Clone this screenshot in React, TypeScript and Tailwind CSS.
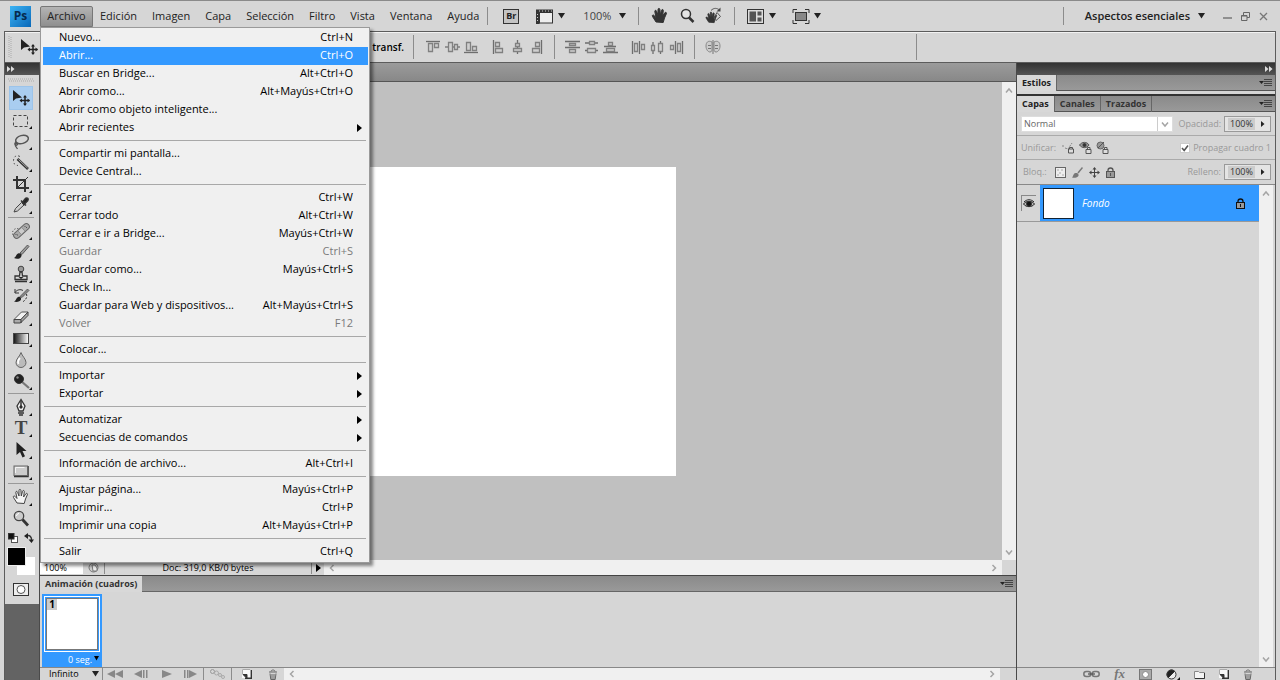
import { useState } from 'react';
import type { ReactNode } from 'react';

type MenuItem = { label: string; keys?: string; disabled?: boolean; submenu?: boolean };

const fileMenu: MenuItem[][] = [
  [
    { label: 'Nuevo...', keys: 'Ctrl+N' },
    { label: 'Abrir...', keys: 'Ctrl+O' },
    { label: 'Buscar en Bridge...', keys: 'Alt+Ctrl+O' },
    { label: 'Abrir como...', keys: 'Alt+Mayús+Ctrl+O' },
    { label: 'Abrir como objeto inteligente...' },
    { label: 'Abrir recientes', submenu: true }
  ],
  [{ label: 'Compartir mi pantalla...' }, { label: 'Device Central...' }],
  [
    { label: 'Cerrar', keys: 'Ctrl+W' },
    { label: 'Cerrar todo', keys: 'Alt+Ctrl+W' },
    { label: 'Cerrar e ir a Bridge...', keys: 'Mayús+Ctrl+W' },
    { label: 'Guardar', keys: 'Ctrl+S', disabled: true },
    { label: 'Guardar como...', keys: 'Mayús+Ctrl+S' },
    { label: 'Check In...' },
    { label: 'Guardar para Web y dispositivos...', keys: 'Alt+Mayús+Ctrl+S' },
    { label: 'Volver', keys: 'F12', disabled: true }
  ],
  [{ label: 'Colocar...' }],
  [
    { label: 'Importar', submenu: true },
    { label: 'Exportar', submenu: true }
  ],
  [
    { label: 'Automatizar', submenu: true },
    { label: 'Secuencias de comandos', submenu: true }
  ],
  [{ label: 'Información de archivo...', keys: 'Alt+Ctrl+I' }],
  [
    { label: 'Ajustar página...', keys: 'Mayús+Ctrl+P' },
    { label: 'Imprimir...', keys: 'Ctrl+P' },
    { label: 'Imprimir una copia', keys: 'Alt+Mayús+Ctrl+P' }
  ],
  [{ label: 'Salir', keys: 'Ctrl+Q' }]
];

const menus = ['Edición', 'Imagen', 'Capa', 'Selección', 'Filtro', 'Vista', 'Ventana', 'Ayuda'];

const Svg = ({ children, w = 18, h = 18 }: { children: ReactNode; w?: number; h?: number }) => (
  <svg width={w} height={h} viewBox={`0 0 ${w} ${h}`} fill="none" stroke="#333" className="block shrink-0" aria-hidden="true">
    {children}
  </svg>
);

const Caret = () => (
  <Svg w={7} h={6}>
    <path d="M0 0h7L3.500 5.500z" fill="#222" stroke="none" />
  </Svg>
);

const Chevron = ({ dir }: { dir: 'up' | 'down' | 'left' | 'right' }) => {
  const d = {
    up: 'M1 6.500l3-3.500 3 3.500',
    down: 'M1 2.500l3 3.500 3-3.500',
    left: 'M5.500 1L2.500 4l3 3',
    right: 'M2.500 1l3 3-3 3'
  };
  return (
    <Svg w={8} h={8}>
      <path d={d[dir]} stroke="#a5a5a5" strokeWidth="1.500" />
    </Svg>
  );
};

const DoubleArrow = () => (
  <Svg w={8} h={6}>
    <path d="M0 0l3.500 3L0 6zM4 0l3.500 3L4 6z" fill="#ddd" stroke="none" />
  </Svg>
);

const PanelMenu = () => (
  <button type="button" aria-label="Menú del panel" className="px-[3px]">
    <Svg w={13} h={8}>
      <path d="M0 2h5L2.500 5z" fill="#222" stroke="none" />
      <path d="M5 .5h8M5 2.500h8M5 4.500h8M5 6.500h8" stroke="#444" />
    </Svg>
  </button>
);

const MoveIcon = () => (
  <Svg>
    <path d="M1 1v11l3-2.500L10 8.500z" fill="#222" stroke="none" />
    <path d="M13 7v9M8.500 11.500h9" stroke="#222" strokeWidth="1.500" />
    <path d="M13 6l2 2.500h-4zM13 17l2-2.500h-4zM7.500 11.500L10 9.500v4zM18 11.500l-2.500-2v4z" fill="#222" stroke="none" />
  </Svg>
);

const handPath = 'M5 15L1.500 9.500C.8 8 2.300 7.500 3.200 8.500L5 10.500 3.800 4.500C3.600 3 5.300 3 5.600 4.300L7 8V2.500C7 1 8.800 1 8.900 2.500L9.300 8l1.200-4.700c.4-1.300 2-1 1.800.4L11.600 9l2.200-3.200c.8-1 2.200-.2 1.500 1.100L13.500 11l-1.300 4.500z';

const toolGroups: { name: string; icon: ReactNode }[][] = [
  [
    { name: 'Marco rectangular', icon: <rect x="1.500" y="3.500" width="14" height="11" stroke="#444" strokeDasharray="3 2" /> },
    {
      name: 'Lazo',
      icon: (
        <>
          <ellipse cx="10" cy="6.500" rx="6.500" ry="4" transform="rotate(-15 10 6.500)" stroke="#555" strokeWidth="1.500" />
          <path d="M4 9c-3 2 .5 4.500 1.500 2.500S2.500 10 3.500 13l2 3" stroke="#555" strokeWidth="1.300" />
        </>
      )
    },
    {
      name: 'Selección rápida',
      icon: (
        <>
          <path d="M8 2.500C4 .5 1.500 3 1.500 6.500S3 11 6 11.500" strokeDasharray="2 2" stroke="#555" />
          <path d="M5.500 5l10.500 10" stroke="#333" strokeWidth="2.500" />
          <path d="M6.500 5.500l9 8.500" stroke="#ccc" strokeWidth=".8" />
        </>
      )
    },
    {
      name: 'Recortar',
      icon: (
        <>
          <path d="M5 1v12h12M1 5h12v12" strokeWidth="2" />
          <path d="M6 12L16 2" />
        </>
      )
    },
    {
      name: 'Cuentagotas',
      icon: (
        <>
          <path d="M2 16l1.500-3.500 6-6 2.500 2.500-6.500 6z" fill="#ccc" stroke="#444" />
          <path d="M9 4.500l5 5M10.500 6.500L13 3c1-1.500 3-1.500 3.200 0s-.7 2.300-2.200 3.500L12 8.500z" fill="#222" strokeWidth="1.500" />
        </>
      )
    }
  ],
  [
    {
      name: 'Pincel corrector',
      icon: (
        <>
          <circle cx="5" cy="11" r="4.500" strokeDasharray="1 2" />
          <rect x="0" y="6" width="19" height="6" rx="3" transform="rotate(-42 9.500 9)" fill="#aaa" stroke="#666" />
          <rect x="7" y="6.500" width="5" height="5" transform="rotate(-42 9.500 9)" fill="#ccc" stroke="#777" strokeWidth=".6" />
          <path d="M4 12v1M5.500 12.500v1M13 4v1M14.500 5v1" stroke="#555" />
        </>
      )
    },
    {
      name: 'Pincel',
      icon: (
        <>
          <path d="M8 10L15.500 2 17 3.500 10 11.500z" fill="#999" stroke="#444" strokeWidth=".8" />
          <path d="M2 15c2-.5 2-3.500 4-4.500s4 .5 3.500 2.500c-.8 3-5 3.500-7.500 2z" fill="#222" stroke="none" />
        </>
      )
    },
    {
      name: 'Tampón de clonar',
      icon: (
        <>
          <circle cx="9" cy="4" r="2.800" fill="#999" stroke="#444" />
          <path d="M8 7h2l.5 4h4.500v3.500H3V11h4.500zM3 16.500h12" fill="#ddd" stroke="#333" strokeWidth="1.300" />
          <path d="M6.500 12h5L9 14z" fill="#222" stroke="none" />
        </>
      )
    },
    {
      name: 'Pincel de historia',
      icon: (
        <>
          <path d="M8 10.500L15.500 3 17 4.500 10 11.500z" fill="#888" stroke="#444" strokeWidth=".7" />
          <path d="M2 15.500c2-.5 2-3.500 4-4.500s3.500.5 3 2.500-4.500 3-7 2z" fill="#222" stroke="none" />
          <path d="M3 3v4h4M3 6.500C5 3.500 8.500 3 11 4.500" />
          <path d="M14.500 8c1 3-.5 6-4 8" strokeDasharray="2 1.500" />
        </>
      )
    },
    {
      name: 'Borrador',
      icon: (
        <>
          <path d="M2 11.500L9.500 4H16l-7 7.500z" fill="#f2f2f2" stroke="#555" />
          <path d="M2 11.500V15h6.500L16 7.500V4l-7 7.500z" fill="#aaa" stroke="#444" />
          <path d="M9 11.500V15" />
        </>
      )
    },
    {
      name: 'Degradado',
      icon: (
        <>
          <defs>
            <linearGradient id="ramp">
              <stop stopColor="#111" />
              <stop offset="1" stopColor="#fff" />
            </linearGradient>
          </defs>
          <rect x="1.500" y="4.500" width="15" height="10" fill="url(#ramp)" stroke="#444" />
        </>
      )
    },
    {
      name: 'Desenfocar',
      icon: (
        <>
          <path d="M9 1.500C8 5 4 8 4 11.500a5 5 0 0 0 10 0C14 8 10 5 9 1.500z" fill="#bbb" stroke="#666" />
          <path d="M8 7c-2 2-2.500 4-1.500 6" stroke="#fff" strokeWidth="1.800" />
        </>
      )
    },
    {
      name: 'Sobreexponer',
      icon: (
        <>
          <path d="M9 9l8 7" stroke="#777" strokeWidth="2.300" />
          <circle cx="7" cy="7" r="4.500" fill="#222" />
          <circle cx="5.500" cy="5.500" r="1.200" fill="#888" stroke="none" />
        </>
      )
    }
  ],
  [
    {
      name: 'Pluma',
      icon: (
        <>
          <path d="M9 1.500L5 8l2 5h4l2-5z" fill="#eee" stroke="#333" strokeWidth="1.300" />
          <path d="M9 3v6M6 15h6M7 17h4" strokeWidth="1.500" />
          <circle cx="9" cy="9" r="1.200" fill="#222" />
        </>
      )
    },
    { name: 'Texto', icon: null },
    { name: 'Selección de trazado', icon: <path d="M4.500 1v13l3.500-3 2.500 5.500 2.500-1.200L10.500 10h4z" fill="#222" stroke="none" /> },
    {
      name: 'Rectángulo',
      icon: (
        <>
          <path d="M2 14.500h14V4" stroke="#333" strokeWidth="1.500" />
          <rect x="2" y="4" width="13.500" height="9.500" fill="#ccc" stroke="#666" />
          <path d="M3.500 11V5.500h9" stroke="#f4f4f4" />
        </>
      )
    }
  ],
  [
    { name: 'Mano', icon: <path d={handPath} fill="#f4f4f4" stroke="#444" /> },
    {
      name: 'Zoom',
      icon: (
        <>
          <path d="M10.500 10.500l5.500 6" strokeWidth="2.800" />
          <circle cx="7" cy="7" r="4.700" fill="#ccc" stroke="#444" strokeWidth="1.300" />
          <path d="M4.500 7C4.700 5.500 5.500 4.800 7 4.500" stroke="#fff" />
        </>
      )
    }
  ]
];

const groupHeights = ['h-[106px]', 'h-[172px]', 'h-[86px]', 'h-[43px]'];

const FileMenu = () => (
  <div role="menu" className="absolute top-full left-0 z-10 w-[330px] border border-[#9a9a9a] bg-[#f0f0f0] p-px text-[11px] text-black shadow-[3px_3px_3px_rgba(0,0,0,0.45)]">
    {fileMenu.map((group, i) => (
      <div key={i}>
        {i > 0 && (
          <div role="separator" className="flex h-2 items-center px-0.5">
            <div className="h-px grow bg-[#a8a8a8]" />
          </div>
        )}
        {group.map(item => (
          <button
            key={item.label}
            type="button"
            role="menuitem"
            disabled={item.disabled}
            className={`mx-px flex h-[18px] w-[325px] items-center pr-[5px] pl-4 text-left ${
              item.label === 'Abrir...' ? 'bg-[#3399ff] text-white' : item.disabled ? 'text-[#7a7a7a]' : ''
            }`}
          >
            <span className="grow">{item.label}</span>
            {item.keys && <span className="pr-[10px]">{item.keys}</span>}
            {item.submenu && (
              <Svg w={6} h={8}>
                <path d="M0 0l5 4-5 4z" fill="#000" stroke="none" />
              </Svg>
            )}
          </button>
        ))}
      </div>
    ))}
  </div>
);

const Divider = ({ className = '' }: { className?: string }) => <div className={`w-px shrink-0 bg-[#8c8c8c] ${className}`} />;

const MenuBar = () => (
  <header className="flex h-[31px] shrink-0 items-center border-t border-[#8a8a8a] pl-[10px] text-[12px] text-[#222]">
    <div className="mr-[9px] flex h-[21px] w-[21px] items-center justify-center bg-linear-to-br from-[#3cb4f5] to-[#0868b8] text-[12px] font-bold text-[#062a4d]">Ps</div>
    <nav className="flex items-center text-[11px]">
      <div className="relative">
        <button type="button" aria-expanded="true" className="block h-[21px] w-[53px] rounded-t-xs border border-[#777] bg-linear-to-b from-[#b4b4b4] to-[#8f8f8f]">
          Archivo
        </button>
        <FileMenu />
      </div>
      {menus.map(name => (
        <button key={name} type="button" className="h-5 pr-2 pl-[7px]">
          {name}
        </button>
      ))}
    </nav>
    <Divider className="mr-[15px] h-[18px]" />
    <button type="button" className="mr-4 h-[15px] w-4 border border-[#333] bg-[#c4c4c4] text-[9px] leading-[12px] font-bold">
      Br
    </button>
    <button type="button" aria-label="Ver extras" className="flex items-center gap-1">
      <Svg w={19} h={15}>
        <path d="M1 .5h17v3H4.500V15H1z" fill="#333" stroke="none" />
        <rect x="4.500" y="3.500" width="13" height="10.500" fill="#eee" stroke="#333" />
        <path d="M4 2h14" stroke="#ccc" strokeDasharray="1 2" />
        <path d="M2.500 5v9" stroke="#ccc" strokeDasharray="1 2" />
      </Svg>
      <Caret />
    </button>
    <button type="button" className="ml-[18px] flex items-center gap-2 text-[11px] text-[#444]">
      100%
      <Caret />
    </button>
    <Divider className="mr-3 ml-3 h-[18px]" />
    <div className="flex items-center gap-[9px]">
      <button type="button" aria-label="Mano">
        <Svg>
          <path d={handPath} fill="#333" />
        </Svg>
      </button>
      <button type="button" aria-label="Zoom">
        <Svg>
          <circle cx="8" cy="7" r="4.500" fill="#e4e4e4" strokeWidth="1.500" />
          <path d="M11 10.500l4.500 4.500" strokeWidth="2.500" />
        </Svg>
      </button>
      <button type="button" aria-label="Rotar vista">
        <Svg>
          <g transform="translate(0 4) scale(.75)">
            <path d={handPath} fill="#333" />
          </g>
          <path d="M12 5.500l3.500 4-4.500 4-2-2.500zM6 3.500C9 .5 12 1 14.500 3" stroke="#555" />
          <path d="M15.500.5v4h-4z" fill="#444" stroke="none" />
        </Svg>
      </button>
    </div>
    <Divider className="mr-3 ml-[11px] h-[18px]" />
    <button type="button" aria-label="Organizar documentos" className="mr-4 flex items-center gap-[5px]">
      <Svg w={17} h={15}>
        <rect x=".5" y=".5" width="16" height="14" fill="#ddd" />
        <path d="M2.500 2.500h6.500v10H2.500zM10.500 2.500h4v4h-4zM10.500 8.500h4v4h-4z" fill="#555" stroke="none" />
      </Svg>
      <Caret />
    </button>
    <button type="button" aria-label="Modo de pantalla" className="flex items-center gap-1">
      <Svg w={18} h={15}>
        <path d="M1 4V.5h4M13 .5h4V4M17 11v3.500h-4M5 14.500H1V11" />
        <rect x="3.500" y="3.500" width="11" height="8" fill="#888" />
      </Svg>
      <Caret />
    </button>
    <div className="grow" />
    <Divider className="mr-[21px] h-[18px]" />
    <button type="button" className="flex items-center gap-2 text-[11px] font-semibold">
      Aspectos esenciales
      <Caret />
    </button>
    <div className="flex items-center gap-[9px] pr-3 pl-[18px]">
      <button type="button" aria-label="Minimizar">
        <Svg w={9} h={9}>
          <path d="M0 6h9" stroke="#777" strokeWidth="1.500" />
        </Svg>
      </button>
      <button type="button" aria-label="Restaurar">
        <Svg w={9} h={9}>
          <path d="M2.500 3V.5h6v5H6M.5 3.500h5.500v5H.5zM.5 4h5.500" stroke="#666" />
        </Svg>
      </button>
      <button type="button" aria-label="Cerrar ventana">
        <Svg w={9} h={9}>
          <path d="M1 1l7 7M8 1L1 8" stroke="#777" strokeWidth="1.300" />
        </Svg>
      </button>
    </div>
  </header>
);

// each drawing is a guide line with two blocks hung on it
const alignIcons: { name: string; d: string; line: string }[][] = [
  [
    { name: 'Alinear bordes superiores', d: 'M3.500 4.500h4v8h-4zM9.500 4.500h4v4h-4z', line: 'M1 2.500h14' },
    { name: 'Alinear centros verticales', d: 'M4.500 3.500h4v9h-4zM10.500 5.500h3v5h-3z', line: 'M1 8h15' },
    { name: 'Alinear bordes inferiores', d: 'M3.500 3.500h4v8h-4zM9.500 7.500h4v4h-4z', line: 'M1 13.500h14' }
  ],
  [
    { name: 'Alinear bordes izquierdos', d: 'M5.500 3.500h4v4h-4zM5.500 9.500h7v4h-7z', line: 'M3.500 1v14' },
    { name: 'Alinear centros horizontales', d: 'M6.500 4.500h4v3h-4zM4.500 9.500h8v3h-8z', line: 'M8.500 1v14' },
    { name: 'Alinear bordes derechos', d: 'M7.500 3.500h4v4h-4zM4.500 9.500h7v4h-7z', line: 'M13.500 1v14' }
  ],
  [
    { name: 'Distribuir bordes superiores', d: 'M5.500 4.500h6v2h-6zM5.500 10.500h6v3h-6z', line: 'M1 2.500h15M1 8.500h15' },
    { name: 'Distribuir centros verticales', d: 'M6.500 2.500h5v3h-5zM4.500 9.500h8v4h-8z', line: 'M2 4h13M2 11.500h13' },
    { name: 'Distribuir bordes inferiores', d: 'M6.500 3.500h4v3h-4zM4.500 9.500h8v3h-8z', line: 'M2 7.500h12M1 13.500h15' }
  ],
  [
    { name: 'Distribuir bordes izquierdos', d: 'M4.500 4.500h3v8h-3zM11.500 5.500h3v5h-3z', line: 'M2.500 2v13M9.500 2v13' },
    { name: 'Distribuir centros horizontales', d: 'M2.500 6.500h3v5h-3zM9.500 4.500h4v8h-4z', line: 'M4 3v12M11.500 2v13' },
    { name: 'Distribuir bordes derechos', d: 'M2.500 6.500h3v4h-3zM9.500 4.500h3v8h-3z', line: 'M7.500 2v13M14.500 2v13' }
  ]
];

const AlignGroup = ({ index }: { index: number }) => (
  <div className="flex">
    {alignIcons[index].map(icon => (
      <button key={icon.name} type="button" aria-label={icon.name} className="flex w-[19px] justify-center">
        <Svg w={17} h={16}>
          <path d={icon.line} stroke="#6e6e6e" strokeWidth="1.300" />
          <path d={icon.d} fill="#d0d0d0" stroke="#808080" strokeWidth="1.300" />
        </Svg>
      </button>
    ))}
  </div>
);

const Grip = () => (
  <Svg w={4} h={22}>
    <path d="M1 0v22M3 1v21" stroke="#aaa" strokeDasharray="1 1" />
  </Svg>
);

const OptionsBar = () => (
  <div className="flex h-8 shrink-0 items-center border-y border-[#5c5c5c] pl-[3px] text-[10px] font-semibold text-black shadow-[inset_0_1px_0_#f2f2f2]">
    <Grip />
    <div className="ml-2">
      <MoveIcon />
    </div>
    <label className="ml-[220px] flex w-[146px] items-center justify-end gap-1 whitespace-nowrap">
      <input type="checkbox" className="h-3 w-3" />
      Mostrar controles transf.
    </label>
    <Divider className="mr-[10px] ml-[9px] h-6" />
    <AlignGroup index={0} />
    <div className="w-2" />
    <AlignGroup index={1} />
    <Divider className="mx-2 h-6" />
    <AlignGroup index={2} />
    <div className="w-[9px]" />
    <AlignGroup index={3} />
    <Divider className="mr-[10px] ml-2 h-6" />
    <button type="button" aria-label="Alinear capas automáticamente">
      <Svg w={16} h={16}>
        <path d="M7 3C3 1 1 3.500 1 7s2 6 4 6 2-2 2-4zM9 3c4-2 6 .5 6 4s-2 6-4 6-2-2-2-4z" fill="#ccc" stroke="#888" />
        <path d="M8 1v14M3 6.500h3M10 6.500h3M3 9.500h3M10 9.500h3" stroke="#777" />
      </Svg>
    </button>
    <Divider className="ml-[195px] h-[26px]" />
  </div>
);

const Corner = () => (
  <span className="absolute right-0 bottom-0.5">
    <Svg w={3} h={3}>
      <path d="M3 0v3H0z" fill="#111" stroke="none" />
    </Svg>
  </span>
);

const Toolbox = () => (
  <aside className="flex w-[34px] shrink-0 flex-col bg-[#636363]">
    <div className="flex h-3 items-center bg-linear-to-b from-[#333] to-[#555] pl-0.5">
      <DoubleArrow />
    </div>
    <div className="flex flex-col items-center bg-[#d6d6d6] pr-0.5 pb-2">
      <div className="mt-[3px] mb-1 h-1">
        <Svg w={26} h={4}>
          <path d="M0 1h26M1 3h25" stroke="#aaa" strokeDasharray="1 1" />
        </Svg>
      </div>
      <button type="button" aria-label="Mover" className="flex h-6 w-6 items-center justify-center border border-[#9cc4ea] bg-[#a9cdf0]">
        <MoveIcon />
      </button>
      {toolGroups.map((group, i) => (
        <div key={i} className="flex w-full flex-col items-center">
          {i > 0 && <div className="mt-px mb-0.5 h-px w-[26px] bg-[#999]" />}
          <div className={`grid auto-rows-fr ${groupHeights[i]}`}>
            {group.map(tool => (
              <button key={tool.name} type="button" aria-label={tool.name} className="relative flex w-[22px] items-center justify-center">
                {tool.icon ? <Svg>{tool.icon}</Svg> : <span className="font-['Liberation_Serif',serif] text-[19px] leading-5 font-bold text-[#444]">T</span>}
                {tool.name !== 'Zoom' && <Corner />}
              </button>
            ))}
          </div>
        </div>
      ))}
      <div className="flex h-[18px] w-[26px] items-center justify-between">
        <button type="button" aria-label="Colores por defecto">
          <Svg w={10} h={10}>
            <rect x="3.500" y="3.500" width="6" height="6" fill="#fff" stroke="#555" />
            <rect x=".5" y=".5" width="5.500" height="5.500" fill="#111" />
          </Svg>
        </button>
        <button type="button" aria-label="Intercambiar colores">
          <Svg w={10} h={10}>
            <path d="M2 3c4-1.500 6 1 5.500 5" strokeWidth="1.500" />
            <path d="M4 0v6L0 3zM4.500 6.500h5.500L7.500 10z" fill="#222" stroke="none" />
          </Svg>
        </button>
      </div>
      <div className="relative h-7 w-7">
        <button type="button" aria-label="Color de fondo" className="absolute right-0 bottom-0 h-[18px] w-[18px] bg-white" />
        <button type="button" aria-label="Color frontal" className="absolute top-0 left-0 h-[19px] w-[19px] border border-[#eee] bg-black" />
      </div>
      <button type="button" aria-label="Máscara rápida" className="mt-2">
        <Svg w={16} h={13}>
          <rect x=".5" y=".5" width="15" height="12" fill="#eee" />
          <circle cx="8" cy="6.500" r="4" fill="#fff" stroke="#555" />
        </Svg>
      </button>
    </div>
  </aside>
);

const NewIcon = () => (
  <Svg w={10} h={10}>
    <path d="M0 0h9v9H0z" fill="#f8f8f8" stroke="none" />
    <path d="M.5 5V.5h8" stroke="#aaa" />
    <path d="M9.300 1v8.300H3" strokeWidth="1.400" />
    <path d="M1 5.500h4v4z" fill="#333" stroke="#333" />
  </Svg>
);

const TrashIcon = () => (
  <Svg w={10} h={11}>
    <path d="M1 3h8M3 2.500C3 .5 7 .5 7 2.500M2 4.500l.8 6h4.400l.8-6M4 5v5M6 5v5" stroke="#666" />
  </Svg>
);

const Timeline = () => (
  <section className="flex shrink-0 flex-col border-t border-[#444]">
    <div className="flex h-4 items-center justify-between border-b border-[#666] bg-linear-to-b from-[#8a8a8a] to-[#999]">
      <h2 className="flex h-4 items-center bg-[#d8d8d8] px-[5px] text-[9px] font-bold text-[#333]">Animación (cuadros)</h2>
      <PanelMenu />
    </div>
    <div className="flex h-[75px] px-0.5 pt-0.5">
      <button type="button" className="flex w-[60px] flex-col items-center bg-[#3399ff] pt-0.5 text-[9px] text-white">
        <span className="block h-14 w-14 border border-white bg-[#3399ff] p-px">
          <span className="block h-full w-full border border-[#777] bg-white">
            <span className="block h-[11px] w-[10px] bg-[#ccc] text-[10px] leading-[11px] font-bold text-black">1</span>
          </span>
        </span>
        <span className="flex h-[15px] w-full items-center justify-end gap-0.5 pr-[3px]">
          0 seg.
          <Svg w={5} h={7}>
            <path d="M0 0h5L2.500 4.500z" fill="#000" stroke="none" />
          </Svg>
        </span>
      </button>
    </div>
    <div className="flex h-[13px] items-center border-t border-[#888]">
      <div className="flex w-[62px] items-center pl-[9px]">
        <select aria-label="Repetición" className="h-3 w-[43px] appearance-none text-[9px] leading-3 text-black">
          <option>Infinito</option>
        </select>
        <Caret />
      </div>
      <Divider className="h-3" />
      <div className="flex items-center gap-[11px] px-1">
        <button type="button" aria-label="Primer cuadro">
          <Svg w={16} h={8}>
            <path d="M8 0v8L0 4zM16 0v8L8 4z" fill="#888" stroke="none" />
          </Svg>
        </button>
        <button type="button" aria-label="Cuadro anterior">
          <Svg w={14} h={8}>
            <path d="M8 0v8L0 4zM9 0h1.500v8H9zM12 0h1.500v8H12z" fill="#888" stroke="none" />
          </Svg>
        </button>
        <button type="button" aria-label="Reproducir">
          <Svg w={14} h={8}>
            <path d="M3 0l10 4-10 4z" fill="#888" stroke="none" />
          </Svg>
        </button>
        <button type="button" aria-label="Cuadro siguiente">
          <Svg w={13} h={8}>
            <path d="M0 0h1.500v8H0zM3 0h1.500v8H3zM5 0l8 4-8 4z" fill="#888" stroke="none" />
          </Svg>
        </button>
      </div>
      <Divider className="ml-0.5 h-3" />
      <button type="button" aria-label="Intercalar" className="mx-[6px]">
        <Svg w={15} h={10}>
          <circle cx="2.500" cy="2.500" r="2" stroke="#999" />
          <circle cx="6.500" cy="4" r="2" stroke="#aaa" />
          <circle cx="10" cy="6" r="1.500" stroke="#aaa" />
          <circle cx="13" cy="8" r="1.500" stroke="#aaa" />
        </Svg>
      </button>
      <Divider className="h-3" />
      <button type="button" aria-label="Duplicar cuadro" className="ml-[10px]">
        <NewIcon />
      </button>
      <button type="button" aria-label="Eliminar cuadro" className="mr-[6px] ml-4">
        <TrashIcon />
      </button>
      <div className="mr-4 flex h-full grow items-center justify-between bg-[#f0f0f0] px-1">
        <Chevron dir="left" />
        <Chevron dir="right" />
      </div>
    </div>
  </section>
);

const Workspace = () => (
  <main className="flex min-w-0 grow flex-col border-x border-[#4a4a4a]">
    <div className="h-[19px] shrink-0 border-b border-[#555] bg-linear-to-b from-[#9b9b9b] to-[#888]" />
    <div className="flex min-h-0 grow bg-[#c0c0c0]">
      <div className="flex grow items-center justify-center">
        <div className="h-[309px] w-[309px] bg-white" />
      </div>
      <div className="flex w-[14px] flex-col items-center justify-between bg-[#f0f0f0] py-1">
        <Chevron dir="up" />
        <Chevron dir="down" />
      </div>
    </div>
    <div className="flex h-[15px] shrink-0 items-center bg-[#d6d6d6] text-[9px] text-black">
      <input aria-label="Nivel de zoom" defaultValue="100%" className="h-[13px] w-[43px] bg-white pl-1" />
      <button type="button" aria-label="Version Cue" className="mx-[5px]">
        <Svg w={11} h={11}>
          <circle cx="5.500" cy="5.500" r="4.500" fill="#ccc" stroke="#777" />
          <path d="M4 3h3l2 3v3H5z" fill="#eee" stroke="#777" />
        </Svg>
      </button>
      <Divider className="h-[13px]" />
      <div className="w-[206px] text-center">Doc: 319,0 KB/0 bytes</div>
      <Divider className="h-[13px]" />
      <button type="button" aria-label="Opciones de estado" className="flex w-3 justify-center">
        <Svg w={5} h={8}>
          <path d="M0 0l5 4-5 4z" fill="#000" stroke="none" />
        </Svg>
      </button>
      <div className="mr-[14px] flex h-full grow items-center justify-between bg-[#f0f0f0] px-1">
        <Chevron dir="left" />
        <Chevron dir="right" />
      </div>
    </div>
    <Timeline />
  </main>
);

const PanelTabs = ({ tabs }: { tabs: string[] }) => (
  <div className="flex h-4 shrink-0 items-center border-b border-[#555] bg-linear-to-b from-[#8a8a8a] to-[#999] text-[9px] font-bold">
    {tabs.map((tab, i) => (
      <button key={tab} type="button" className={`h-4 border-r border-[#666] px-[5px] ${i === 0 ? 'bg-[#d8d8d8] text-[#222]' : 'text-[#333]'}`}>
        {tab}
      </button>
    ))}
    <div className="grow" />
    <PanelMenu />
  </div>
);

const PercentField = ({ id, label }: { id: string; label: string }) => (
  <div className="flex items-center gap-[3px]">
    <label htmlFor={id}>{label}</label>
    <div className="flex h-4 w-[47px] items-center border border-[#999] bg-[#e4e4e4] pl-[3px]">
      <input id={id} defaultValue="100%" className="h-3 w-[27px] bg-[#ccc] text-center text-[#333]" />
      <button type="button" aria-label={`Ajustar ${label}`} className="flex grow justify-center">
        <Svg w={4} h={6}>
          <path d="M0 0l3.500 3L0 6z" fill="#222" stroke="none" />
        </Svg>
      </button>
    </div>
  </div>
);

const LockIcon = ({ fill = '#555' }: { fill?: string }) => (
  <Svg w={9} h={11}>
    <path d="M2 5V3.500a2.500 2.500 0 0 1 5 0V5" stroke={fill} strokeWidth="1.300" />
    <rect x=".5" y="4.500" width="8" height="6" fill="#999" stroke={fill} />
    <path d="M4.500 6v3" stroke={fill} />
  </Svg>
);

const Eye = () => (
  <Svg w={12} h={10}>
    <path d="M.5 5C3 1.500 9 1.500 11.500 5 9 8.500 3 8.500.5 5z" fill="#bbb" stroke="#222" />
    <circle cx="6" cy="4.800" r="2.500" fill="#111" />
    <path d="M1 3C4 0 8 0 11 3" stroke="#222" />
  </Svg>
);

const LayersPanel = () => {
  const [propagate, setPropagate] = useState(true);

  return (
    <aside className="flex w-[258px] shrink-0 flex-col bg-[#d6d6d6] text-[9px] text-[#999]">
      <div className="flex h-3 shrink-0 items-center justify-end bg-linear-to-b from-[#333] to-[#555] pr-0.5">
        <DoubleArrow />
      </div>
      <PanelTabs tabs={['Estilos']} />
      <div className="mt-[3px] h-0.5 shrink-0 bg-[#333]" />
      <PanelTabs tabs={['Capas', 'Canales', 'Trazados']} />
      <div className="flex h-6 shrink-0 items-center justify-between border-b border-[#aaa] px-1">
        <div className="flex h-4 w-[152px] items-center border border-[#ddd] bg-white pr-[3px]">
          <select aria-label="Modo de fusión" className="h-[14px] grow appearance-none border-r border-[#ccc] pl-0.5 leading-3 text-[#666]">
            <option>Normal</option>
          </select>
          <span className="pl-[3px]">
            <Chevron dir="down" />
          </span>
        </div>
        <PercentField id="opacity" label="Opacidad:" />
      </div>
      <div className="flex h-6 shrink-0 items-center border-b border-[#aaa] px-1">
        <span className="pr-[6px]">Unificar:</span>
        <div className="flex gap-1">
          <button type="button" aria-label="Unificar posición">
            <Svg w={13} h={13}>
              <path d="M0 5h2M3 7l3 1 4-6" stroke="#888" strokeDasharray="2 1" />
              <path d="M7.500 8V6.500h3V8M6.500 8h5v4h-5z" fill="#ddd" stroke="#555" />
            </Svg>
          </button>
          <button type="button" aria-label="Unificar visibilidad">
            <Svg w={13} h={13}>
              <path d="M.5 4C3 .5 8 .5 10 4 8 7.500 3 7.500.5 4z" fill="#999" stroke="#555" />
              <circle cx="5.500" cy="4" r="1.500" fill="#333" />
              <path d="M8.500 8V6.500h2.500V8M7 8.500h5v4H7z" fill="#ddd" stroke="#555" />
            </Svg>
          </button>
          <button type="button" aria-label="Unificar estilo">
            <Svg w={13} h={13}>
              <circle cx="4.500" cy="4.500" r="3.500" fill="#999" stroke="#666" />
              <path d="M2 7L8 1M8.500 8V6.500h2.500V8M7 8.500h5v4H7z" fill="#ddd" stroke="#555" />
            </Svg>
          </button>
        </div>
        <div className="grow" />
        <div className="relative mr-[3px] h-[10px] w-[10px]">
          <input
            id="propagate"
            type="checkbox"
            checked={propagate}
            onChange={e => setPropagate(e.target.checked)}
            className="block h-[10px] w-[10px] appearance-none border border-[#ccc] bg-white"
          />
          {propagate && (
            <span className="pointer-events-none absolute inset-0">
              <Svg w={10} h={10}>
                <path d="M2 5l2.200 2.500L8 2.500" stroke="#555" strokeWidth="1.600" />
              </Svg>
            </span>
          )}
        </div>
        <label htmlFor="propagate">Propagar cuadro 1</label>
      </div>
      <div className="flex h-[25px] shrink-0 items-center border-b border-[#888] pr-1 pl-[6px]">
        <span className="pr-2">Bloq.:</span>
        <div className="flex items-center gap-[6px]">
          <button type="button" aria-label="Bloquear transparencia">
            <Svg w={11} h={11}>
              <rect x=".5" y=".5" width="10" height="10" fill="#eee" stroke="#666" />
              <path d="M2 2h2v2H2zM6 2h2v2H6zM4 5h2v2H4zM2 7h2v2H2zM7 7h2v2H7z" fill="#ccc" stroke="none" />
            </Svg>
          </button>
          <button type="button" aria-label="Bloquear píxeles">
            <Svg w={11} h={11}>
              <path d="M6 6l4.500-5.500" strokeWidth="1.500" stroke="#777" />
              <path d="M0 10.500c1.500-1 1-4 3.500-4.500S7.500 8 6 9.500s-4 1.500-6 1z" fill="#777" stroke="none" />
            </Svg>
          </button>
          <button type="button" aria-label="Bloquear posición">
            <Svg w={11} h={11}>
              <path d="M5.500 1v9M1 5.500h9" stroke="#444" />
              <path d="M5.500 0l2 2.500h-4zM5.500 11l2-2.500h-4zM0 5.500l2.500-2v4zM11 5.500l-2.500-2v4z" fill="#444" stroke="none" />
            </Svg>
          </button>
          <button type="button" aria-label="Bloquear todo">
            <LockIcon />
          </button>
        </div>
        <div className="grow" />
        <PercentField id="fill" label="Relleno:" />
      </div>
      <div className="flex min-h-0 grow pr-0.5">
        <ul className="grow">
          <li className="flex h-[37px] items-center border-b border-[#999]">
            <button type="button" aria-label="Visibilidad de la capa" className="mx-1 flex h-4 w-[15px] items-center justify-center border-t border-l border-[#888]">
              <Eye />
            </button>
            <div className="flex h-full grow items-center bg-[#3399ff] pr-[14px] pl-[3px] text-white">
              <div className="h-[31px] w-[31px] border border-[#123] bg-white" />
              <span className="grow pl-2 text-[10px] italic">Fondo</span>
              <LockIcon fill="#111" />
            </div>
          </li>
        </ul>
        <div className="flex w-[14px] flex-col items-center justify-between bg-[#f0f0f0] py-1">
          <Chevron dir="up" />
          <Chevron dir="down" />
        </div>
      </div>
      <div className="flex h-[13px] shrink-0 items-center justify-end gap-[14px] border-t border-[#888] pr-[22px]">
        <button type="button" aria-label="Enlazar capas">
          <Svg w={17} h={8}>
            <rect x=".8" y="1.500" width="7" height="5" rx="2.500" stroke="#777" strokeWidth="1.500" />
            <rect x="9.200" y="1.500" width="7" height="5" rx="2.500" stroke="#777" strokeWidth="1.500" />
            <path d="M5 4h7" stroke="#555" strokeWidth="1.300" />
          </Svg>
        </button>
        <button type="button" className="font-['Liberation_Serif',serif] text-[13px] leading-3 font-bold text-[#777] italic">
          fx
        </button>
        <button type="button" aria-label="Añadir máscara">
          <Svg w={13} h={11}>
            <rect x=".5" y=".5" width="12" height="10" fill="#aaa" stroke="#777" />
            <circle cx="6.500" cy="5.500" r="3" fill="#fff" stroke="#888" />
          </Svg>
        </button>
        <button type="button" aria-label="Capa de ajuste">
          <Svg w={14} h={11}>
            <circle cx="5.500" cy="5.500" r="4.500" fill="#eee" />
            <path d="M2.300 8.700A4.500 4.500 0 0 1 8.700 2.300z" fill="#222" />
            <path d="M14 8v3h-3z" fill="#111" stroke="none" />
          </Svg>
        </button>
        <button type="button" aria-label="Nuevo grupo">
          <Svg w={11} h={9}>
            <path d="M.5 1.500h4l1 1h5v6H.5z" fill="#f4f4f4" stroke="#888" />
            <path d="M1 8.500h9.500V3" stroke="#333" />
          </Svg>
        </button>
        <button type="button" aria-label="Nueva capa">
          <NewIcon />
        </button>
        <button type="button" aria-label="Eliminar capa">
          <TrashIcon />
        </button>
      </div>
    </aside>
  );
};

const App = () => (
  <div className="flex h-screen flex-col overflow-hidden bg-[#d6d6d6] font-['Open_Sans','Noto_Sans',sans-serif]">
    <MenuBar />
    <div className="mx-1 flex min-h-0 grow flex-col border-x border-[#5c5c5c]">
      <OptionsBar />
      <div className="flex min-h-0 grow">
        <Toolbox />
        <Workspace />
        <LayersPanel />
      </div>
    </div>
  </div>
);

export default App;
